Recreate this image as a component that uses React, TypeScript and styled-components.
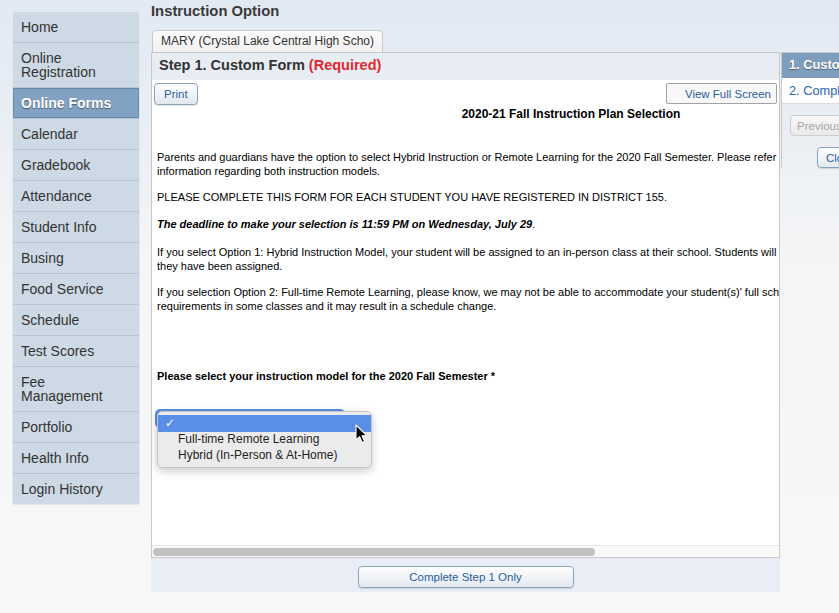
import styled, { createGlobalStyle } from "styled-components";

const GlobalStyle = createGlobalStyle`
	html, body {
		margin: 0;
		height: 100%;
		overflow: hidden;
	}
	body {
		background: linear-gradient(#e1e9f3 0, #f4f5f6 260px, #f8f8f8 100%);
		font-family: "Liberation Sans", Arial, Helvetica, sans-serif;
		color: #333;
	}
`;

const Page = styled.div`
	display: flex;
	align-items: flex-start;
	gap: 11px;
	padding-left: 12px;
	width: 839px;
	height: 613px;
	box-sizing: border-box;
	overflow: hidden;
`;

const Sidebar = styled.nav`
	flex: none;
	width: 128px;
	margin-top: 11px;
	border: 1px solid #e3e7eb;
	border-radius: 3px;
	background: #cdd9e5;
	box-sizing: border-box;
	overflow: hidden;
`;

const NavItem = styled.div<{ $active?: boolean }>`
	padding: 8px;
	font-size: 14px;
	line-height: 14px;
	border-bottom: 1px solid #b7c4d1;
	color: ${(p) => (p.$active ? "#fff" : "#333")};
	font-weight: ${(p) => (p.$active ? "bold" : "normal")};
	background: ${(p) => (p.$active ? "#82a2c3" : "transparent")};
	box-shadow: ${(p) => (p.$active ? "inset 0 0 0 1px #6688aa" : "none")};
	text-shadow: ${(p) => (p.$active ? "0 1px 1px rgba(0,0,0,0.45)" : "none")};
	&:last-child {
		border-bottom: none;
	}
`;

const NavLine = styled.span`
	display: block;
`;

const Main = styled.main`
	flex: none;
	width: 720px;
	display: flex;
	flex-direction: column;
`;

const PageTitle = styled.h1`
	margin: 2px 0 0;
	font-size: 14.8px;
	line-height: 18px;
	font-weight: bold;
	color: #3a3a3a;
`;

const Tab = styled.div`
	align-self: flex-start;
	margin: 10px 0 0 1px;
	height: 22px;
	padding: 0 8px;
	box-sizing: border-box;
	border: 1px solid #c6c6c6;
	border-bottom: none;
	border-radius: 5px 5px 0 0;
	background: linear-gradient(#fbfbfb, #f1f1f1);
	font-size: 12px;
	line-height: 21px;
	color: #333;
	white-space: nowrap;
`;

const Row = styled.div`
	display: flex;
	align-items: flex-start;
	gap: 1px;
`;

const Column = styled.div`
	flex: none;
	width: 629px;
	display: flex;
	flex-direction: column;
`;

const FormPanel = styled.section`
	border: 1px solid #c8c8c8;
	background: #fff;
	display: flex;
	flex-direction: column;
`;

const StepHeader = styled.div`
	height: 27px;
	padding: 0 7px 3px;
	box-sizing: border-box;
	background: #e8edf4;
	font-size: 14.5px;
	line-height: 24px;
	font-weight: bold;
	color: #333;
`;

const Required = styled.span`
	color: #e3262c;
`;

const FormBody = styled.div`
	height: 465px;
	display: flex;
	flex-direction: column;
`;

const Toolbar = styled.div`
	display: flex;
	justify-content: space-between;
	align-items: flex-start;
	padding: 3px 2px 0 2px;
`;

const BlueButton = styled.button<{ $wide?: number }>`
	height: 22px;
	padding: 0 9px;
	width: ${(p) => (p.$wide ? `${p.$wide}px` : "auto")};
	border: 1px solid #8ba4be;
	border-radius: 4px;
	background: linear-gradient(#fefefe, #e3e9f0);
	box-shadow: 0 1px 1px rgba(0, 0, 0, 0.12);
	font-family: inherit;
	font-size: 11.5px;
	color: #2a5e9f;
	cursor: pointer;
`;

const FullScreenButton = styled.button`
	width: 111px;
	height: 21px;
	padding: 0 5px;
	text-align: right;
	border: 1px solid #a3a3a3;
	border-radius: 2px;
	background: #f8f8f8;
	font-family: inherit;
	font-size: 11.5px;
	color: #2a5e9f;
`;

const Scroll = styled.div`
	flex: 1;
	overflow: hidden;
`;

const Inner = styled.div`
	width: 838px;
	padding: 0 5px;
	box-sizing: border-box;
	color: #000;
	font-size: 11px;
	line-height: 14px;
`;

const FormTitle = styled.div`
	margin-top: 2px;
	text-align: center;
	font-size: 12px;
	font-weight: bold;
`;

const Para = styled.p<{ $top: number; $bold?: boolean }>`
	margin: ${(p) => p.$top}px 0 0;
	font-weight: ${(p) => (p.$bold ? "bold" : "normal")};
`;

const Line = styled.span`
	display: block;
	white-space: nowrap;
`;

const Emph = styled.b`
	font-style: italic;
`;

const SelectWrap = styled.div`
	position: relative;
	margin: 26px 0 0 -2px;
	width: 190px;
	height: 19px;
`;

const SelectBox = styled.div`
	height: 19px;
	border-radius: 5px;
	background: #5b8fe4;
`;

const Menu = styled.ul`
	position: absolute;
	left: 2px;
	top: 2px;
	width: 215px;
	margin: 0;
	padding: 3px 0 3px;
	list-style: none;
	box-sizing: border-box;
	background: #ebebeb;
	border: 1px solid #c4c4c4;
	border-radius: 5px;
	box-shadow: 0 3px 9px rgba(0, 0, 0, 0.22);
	font-family: "Liberation Sans", Arial, sans-serif;
`;

const MenuItem = styled.li<{ $selected?: boolean }>`
	position: relative;
	height: ${(p) => (p.$selected ? 17 : 16)}px;
	padding-left: 20px;
	font-size: 12px;
	line-height: ${(p) => (p.$selected ? 17 : 15)}px;
	color: ${(p) => (p.$selected ? "#fff" : "#1e1e1e")};
	background: ${(p) => (p.$selected ? "#5b8ee6" : "transparent")};
	white-space: nowrap;
`;

const Check = styled.span`
	position: absolute;
	left: 7px;
	top: 0;
	font-size: 12px;
	font-family: "DejaVu Sans", sans-serif;
`;

const Cursor = styled.svg`
	position: absolute;
	left: 197px;
	top: 12px;
`;

const ScrollTrack = styled.div`
	height: 12px;
	box-sizing: border-box;
	padding: 2px 1px;
	border-top: 1px solid #e6e6e6;
	background: #fafafa;
`;

const ScrollThumb = styled.div`
	width: 442px;
	height: 8px;
	border-radius: 4px;
	background: #c1c1c1;
`;

const BottomBar = styled.div`
	height: 34px;
	display: flex;
	justify-content: center;
	align-items: flex-start;
	padding-top: 8px;
	box-sizing: border-box;
	background: #e9edf5;
`;

const StepPanel = styled.aside`
	flex: none;
	width: 140px;
	border-top: 1px solid #c8c8c8;
	border-left: 1px solid #c8c8c8;
`;

const StepRow = styled.div<{ $current?: boolean }>`
	height: ${(p) => (p.$current ? 24 : 25)}px;
	padding-left: 7px;
	font-size: 12.8px;
	line-height: ${(p) => (p.$current ? 23 : 25)}px;
	white-space: nowrap;
	font-weight: ${(p) => (p.$current ? "bold" : "normal")};
	color: ${(p) => (p.$current ? "#fff" : "#2563ad")};
	background: ${(p) => (p.$current ? "#7f9ebe" : "#fff")};
	text-shadow: ${(p) => (p.$current ? "0 1px 1px rgba(0,0,0,0.4)" : "none")};
	border-bottom: 1px solid ${(p) => (p.$current ? "#7f9ebe" : "#dcdcdc")};
`;

const StepActions = styled.div`
	display: flex;
	flex-direction: column;
	align-items: flex-start;
	padding: 11px 0 0 8px;
	gap: 11px;
`;

const DisabledButton = styled.button`
	height: 21px;
	padding: 0 6px;
	border: 1px solid #cdcdcd;
	border-radius: 4px;
	background: linear-gradient(#f8f8f8, #e9e9e9);
	font-family: inherit;
	font-size: 11.5px;
	color: #a6a6a6;
`;

const CloseButton = styled(BlueButton)`
	height: 21px;
	margin-left: 27px;
	padding: 0 8px;
`;

const navItems = [
	"Home",
	"Online\nRegistration",
	"Online Forms",
	"Calendar",
	"Gradebook",
	"Attendance",
	"Student Info",
	"Busing",
	"Food Service",
	"Schedule",
	"Test Scores",
	"Fee\nManagement",
	"Portfolio",
	"Health Info",
	"Login History",
];

export default function App(): JSX.Element {
	return (
		<>
			<GlobalStyle />
			<Page>
				<Sidebar>
					{navItems.map((item) => (
						<NavItem key={item} $active={item === "Online Forms"}>
							{item.split("\n").map((part) => (
								<NavLine key={part}>{part}</NavLine>
							))}
						</NavItem>
					))}
				</Sidebar>
				<Main>
					<PageTitle>Instruction Option</PageTitle>
					<Tab>MARY (Crystal Lake Central High Scho)</Tab>
					<Row>
						<Column>
							<FormPanel>
								<StepHeader>
									Step 1. Custom Form <Required>(Required)</Required>
								</StepHeader>
								<FormBody>
									<Toolbar>
										<BlueButton>Print</BlueButton>
										<FullScreenButton>View Full Screen</FullScreenButton>
									</Toolbar>
									<Scroll>
										<Inner>
											<FormTitle>2020-21 Fall Instruction Plan Selection</FormTitle>
											<Para $top={29}>
												<Line>
													Parents and guardians have the option to select Hybrid Instruction or Remote Learning for
													the 2020 Fall Semester. Please refer to the attached documents for more
												</Line>
												<Line>information regarding both instruction models.</Line>
											</Para>
											<Para $top={12}>
												<Line>
													PLEASE COMPLETE THIS FORM FOR EACH STUDENT YOU HAVE REGISTERED IN DISTRICT 155.
												</Line>
											</Para>
											<Para $top={13}>
												<Line>
													<Emph>The deadline to make your selection is 11:59 PM on Wednesday, July 29</Emph>.
												</Line>
											</Para>
											<Para $top={14}>
												<Line>
													If you select Option 1: Hybrid Instruction Model, your student will be assigned to an
													in-person class at their school. Students will attend on the days
												</Line>
												<Line>they have been assigned.</Line>
											</Para>
											<Para $top={12}>
												<Line>
													If you selection Option 2: Full-time Remote Learning, please know, we may not be able to
													accommodate your student(s)' full schedule
												</Line>
												<Line>requirements in some classes and it may result in a schedule change.</Line>
											</Para>
											<Para $top={56} $bold>
												<Line>Please select your instruction model for the 2020 Fall Semester *</Line>
											</Para>
											<SelectWrap>
												<SelectBox />
												<Menu>
													<MenuItem $selected>
														<Check>✓</Check>
													</MenuItem>
													<MenuItem>Full-time Remote Learning</MenuItem>
													<MenuItem>Hybrid (In-Person &amp; At-Home)</MenuItem>
													<Cursor width="13" height="20" viewBox="0 0 13 20">
														<path
															d="M1 1 L1 16 L4.6 12.6 L7.2 18.6 L9.6 17.6 L7 11.8 L11.8 11.6 Z"
															fill="#000"
															stroke="#fff"
															strokeWidth="1.1"
															strokeLinejoin="round"
														/>
													</Cursor>
												</Menu>
											</SelectWrap>
										</Inner>
									</Scroll>
								</FormBody>
								<ScrollTrack>
									<ScrollThumb />
								</ScrollTrack>
							</FormPanel>
							<BottomBar>
								<BlueButton $wide={216}>Complete Step 1 Only</BlueButton>
							</BottomBar>
						</Column>
						<StepPanel>
							<StepRow $current>1. Custom Form</StepRow>
							<StepRow>2. Complete</StepRow>
							<StepActions>
								<DisabledButton>Previous</DisabledButton>
								<CloseButton>Close</CloseButton>
							</StepActions>
						</StepPanel>
					</Row>
				</Main>
			</Page>
		</>
	);
}
